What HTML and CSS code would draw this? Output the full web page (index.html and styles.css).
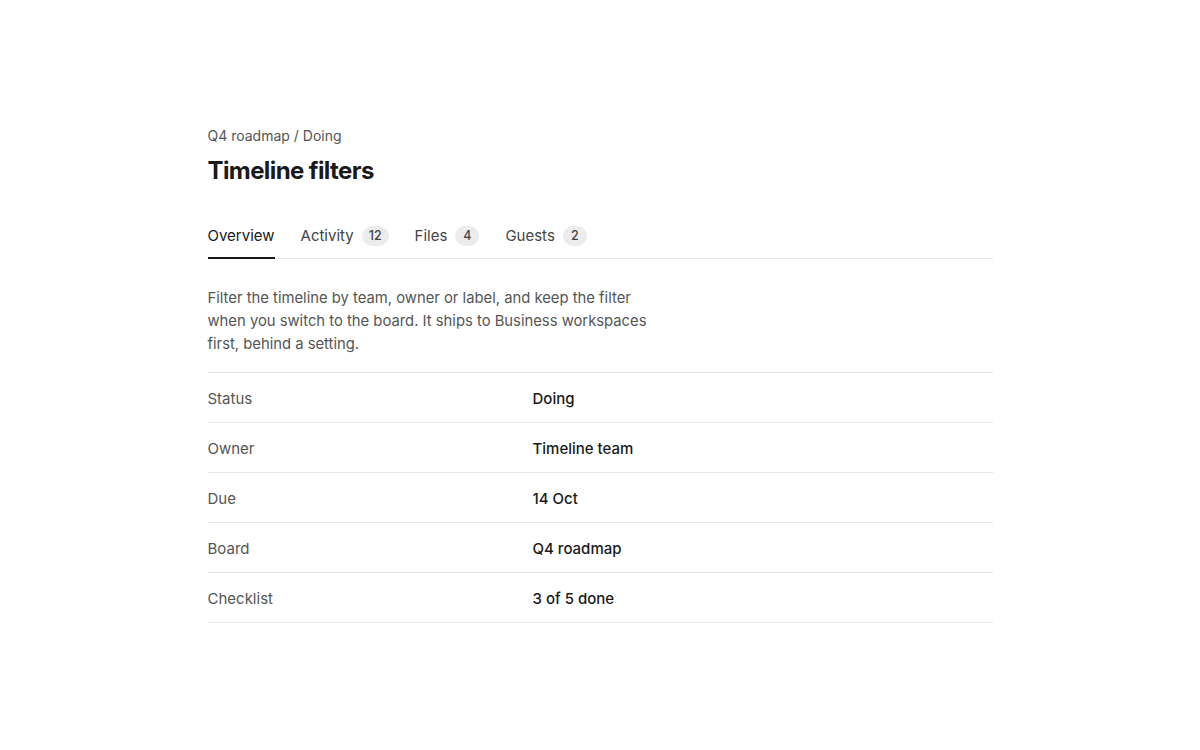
FILE: index.html
```html
<!DOCTYPE html>
<html lang="en">
<head>
  <meta charset="UTF-8" />
  <meta name="viewport" content="width=device-width, initial-scale=1.0" />
  <title>Timeline filters</title>
  <link rel="stylesheet" href="styles.css">
</head>
<body>
  <div class="page">
    <div class="crumbs">Q4 roadmap / Doing</div>
    <h1 class="title">Timeline filters</h1>

    <nav class="tabs">
      <a class="tab active">Overview</a>
      <a class="tab">Activity <span class="count">12</span></a>
      <a class="tab">Files <span class="count">4</span></a>
      <a class="tab">Guests <span class="count">2</span></a>
    </nav>

    <p class="summary">Filter the timeline by team, owner or label, and keep the filter when you switch to the board. It ships to Business workspaces first, behind a setting.</p>

    <div class="details">
      <div class="row"><span class="label">Status</span><span class="value">Doing</span></div>
      <div class="row"><span class="label">Owner</span><span class="value">Timeline team</span></div>
      <div class="row"><span class="label">Due</span><span class="value">14 Oct</span></div>
      <div class="row"><span class="label">Board</span><span class="value">Q4 roadmap</span></div>
      <div class="row"><span class="label">Checklist</span><span class="value">3 of 5 done</span></div>
    </div>
  </div>
</body>
</html>
```

FILE: styles.css
```css
* { box-sizing: border-box; }

body {
  margin: 0;
  font-family: Inter, 'Noto Sans', sans-serif;
  background: #ffffff;
  color: #1a1a1a;
}

.page {
  max-width: 785px;
  margin: 0 auto;
  padding-top: 126px;
}

.crumbs {
  font-size: 14px;
  line-height: 20px;
  color: #555555;
}

.title {
  margin: 9px 0 0;
  font-size: 24px;
  line-height: 32px;
  font-weight: 700;
  letter-spacing: -0.6px;
  color: #1a1a1a;
}

.tabs {
  display: flex;
  gap: 26px;
  margin-top: 37px;
  border-bottom: 1px solid #e6e6e6;
}

.tab {
  display: flex;
  align-items: center;
  gap: 8px;
  padding: 1px 0 10px;
  margin-bottom: -1px;
  font-size: 15px;
  line-height: 22px;
  color: #444444;
  border-bottom: 2px solid transparent;
}

.tab.active {
  color: #1a1a1a;
  border-bottom-color: #1a1a1a;
}

.count {
  display: inline-block;
  min-width: 24px;
  padding: 0 7px;
  border-radius: 10px;
  background: #ececec;
  font-size: 12.5px;
  line-height: 20px;
  font-weight: 500;
  text-align: center;
  color: #444444;
}

.summary {
  max-width: 450px;
  margin: 28px 0 0;
  padding-bottom: 16px;
  font-size: 14.8px;
  line-height: 23px;
  color: #555555;
}

.details {
  border-top: 1px solid #e6e6e6;
}

.row {
  display: grid;
  grid-template-columns: 325px 1fr;
  align-items: center;
  height: 50px;
  padding-top: 1px;
  border-bottom: 1px solid #e6e6e6;
  font-size: 15px;
}

.label {
  color: #555555;
}

.value {
  font-weight: 500;
  color: #1a1a1a;
}
```
